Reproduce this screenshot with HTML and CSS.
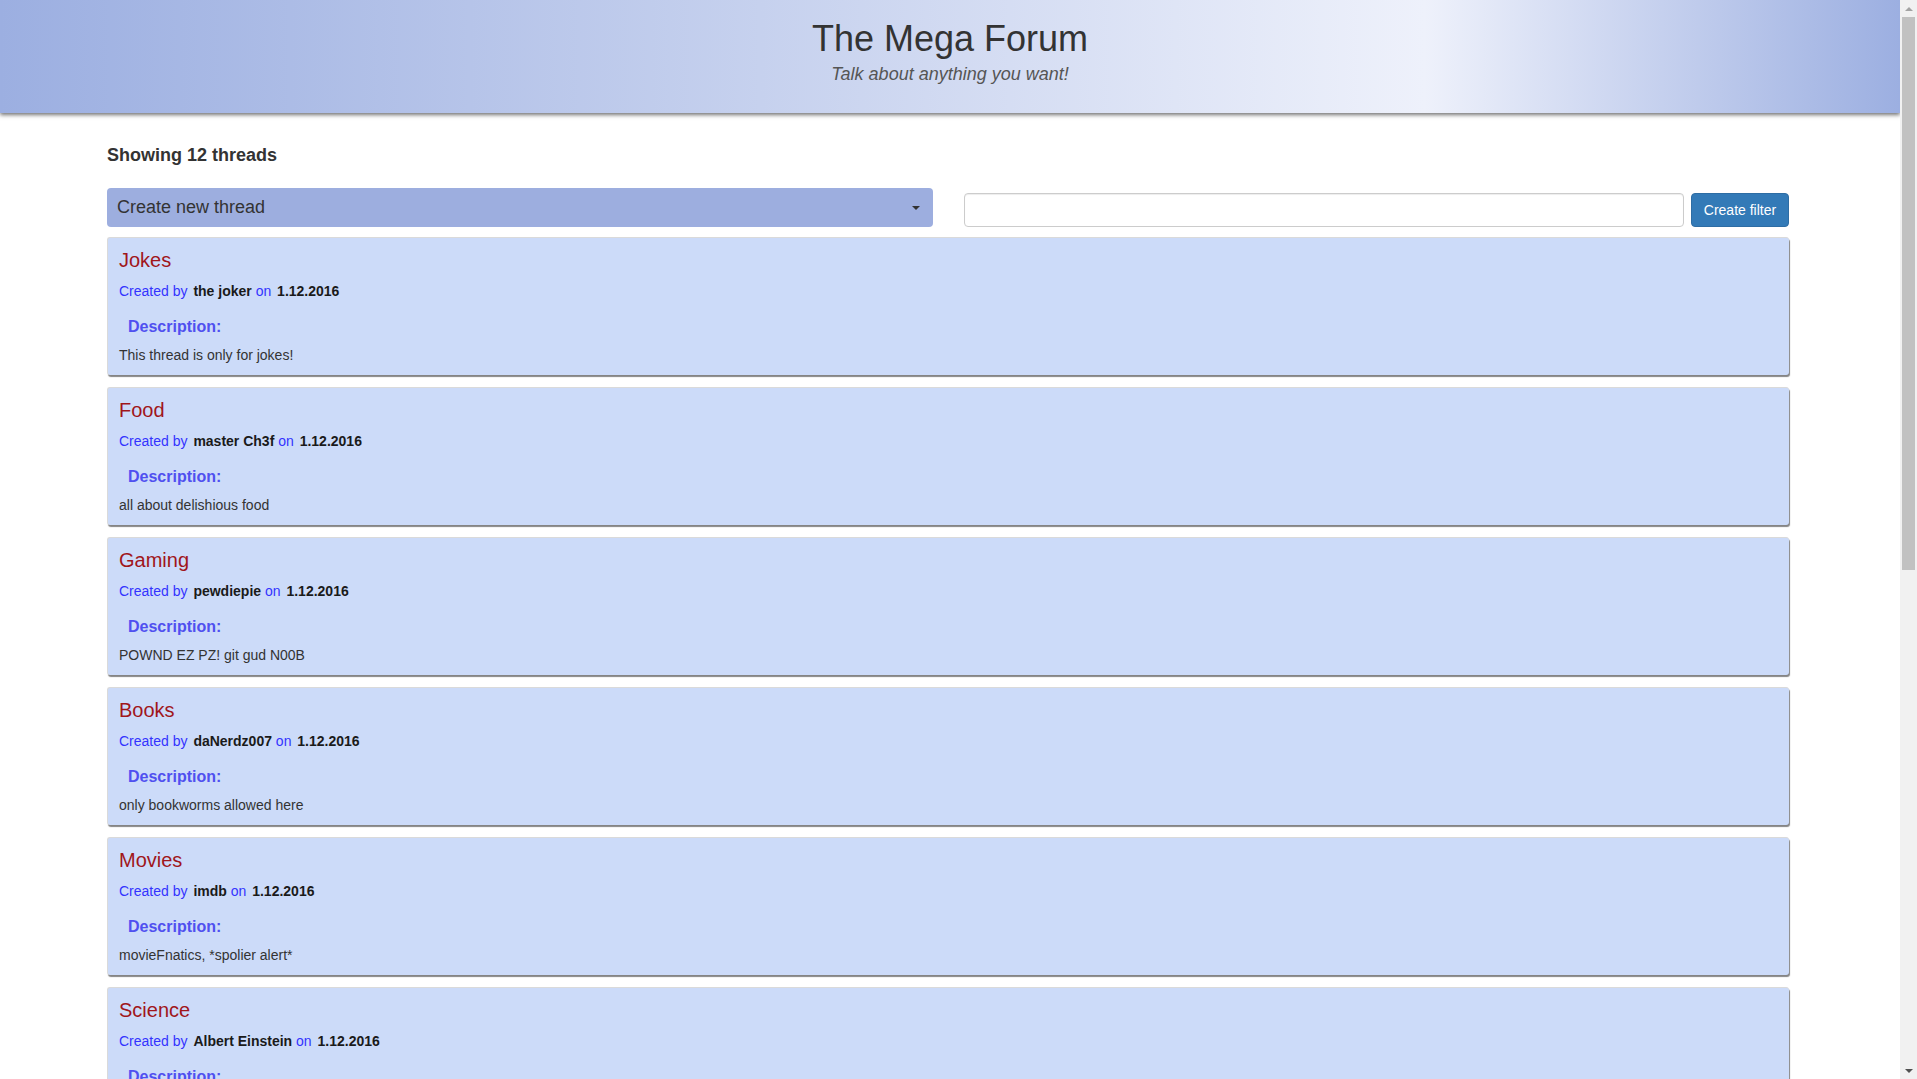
FILE: index.html
```html
<!DOCTYPE html>
<html lang="en">
<head>
<meta charset="utf-8">
<title>The Mega Forum</title>
<link rel="stylesheet" href="styles.css">
</head>
<body>
<div class="page">
<header class="site-header">
  <h1 class="site-title">The Mega Forum</h1>
  <p class="site-tagline">Talk about anything you want!</p>
</header>
<main class="container">
  <h4 class="thread-count">Showing 12 threads</h4>
  <div class="toolbar">
    <div class="new-thread">
      <span class="new-thread-label">Create new thread</span>
      <span class="caret"></span>
    </div>
    <div class="filter-group">
      <input class="filter-input" type="text">
      <button class="btn-primary" type="button">Create filter</button>
    </div>
  </div>
  <ul class="thread-list">
    <li class="thread-card">
      <h3 class="thread-title">Jokes</h3>
      <p class="thread-meta"><span class="meta-label">Created by</span> <b>the joker</b> <span class="meta-label">on</span> <b>1.12.2016</b></p>
      <h5 class="desc-label">Description:</h5>
      <p class="desc-text">This thread is only for jokes!</p>
    </li>
    <li class="thread-card">
      <h3 class="thread-title">Food</h3>
      <p class="thread-meta"><span class="meta-label">Created by</span> <b>master Ch3f</b> <span class="meta-label">on</span> <b>1.12.2016</b></p>
      <h5 class="desc-label">Description:</h5>
      <p class="desc-text">all about delishious food</p>
    </li>
    <li class="thread-card">
      <h3 class="thread-title">Gaming</h3>
      <p class="thread-meta"><span class="meta-label">Created by</span> <b>pewdiepie</b> <span class="meta-label">on</span> <b>1.12.2016</b></p>
      <h5 class="desc-label">Description:</h5>
      <p class="desc-text">POWND EZ PZ! git gud N00B</p>
    </li>
    <li class="thread-card">
      <h3 class="thread-title">Books</h3>
      <p class="thread-meta"><span class="meta-label">Created by</span> <b>daNerdz007</b> <span class="meta-label">on</span> <b>1.12.2016</b></p>
      <h5 class="desc-label">Description:</h5>
      <p class="desc-text">only bookworms allowed here</p>
    </li>
    <li class="thread-card">
      <h3 class="thread-title">Movies</h3>
      <p class="thread-meta"><span class="meta-label">Created by</span> <b>imdb</b> <span class="meta-label">on</span> <b>1.12.2016</b></p>
      <h5 class="desc-label">Description:</h5>
      <p class="desc-text">movieFnatics, *spolier alert*</p>
    </li>
    <li class="thread-card">
      <h3 class="thread-title">Science</h3>
      <p class="thread-meta"><span class="meta-label">Created by</span> <b>Albert Einstein</b> <span class="meta-label">on</span> <b>1.12.2016</b></p>
      <h5 class="desc-label">Description:</h5>
      <p class="desc-text">everything is relative</p>
    </li>
    <li class="thread-card">
      <h3 class="thread-title">Music</h3>
      <p class="thread-meta"><span class="meta-label">Created by</span> <b>dj khaled</b> <span class="meta-label">on</span> <b>1.12.2016</b></p>
      <h5 class="desc-label">Description:</h5>
      <p class="desc-text">share your favourite tunes</p>
    </li>
    <li class="thread-card">
      <h3 class="thread-title">Sports</h3>
      <p class="thread-meta"><span class="meta-label">Created by</span> <b>ronaldo7</b> <span class="meta-label">on</span> <b>1.12.2016</b></p>
      <h5 class="desc-label">Description:</h5>
      <p class="desc-text">football, hockey and more</p>
    </li>
    <li class="thread-card">
      <h3 class="thread-title">Travel</h3>
      <p class="thread-meta"><span class="meta-label">Created by</span> <b>globetrotter</b> <span class="meta-label">on</span> <b>1.12.2016</b></p>
      <h5 class="desc-label">Description:</h5>
      <p class="desc-text">tell us where you have been</p>
    </li>
    <li class="thread-card">
      <h3 class="thread-title">Programming</h3>
      <p class="thread-meta"><span class="meta-label">Created by</span> <b>h4x0r</b> <span class="meta-label">on</span> <b>1.12.2016</b></p>
      <h5 class="desc-label">Description:</h5>
      <p class="desc-text">it works on my machine</p>
    </li>
    <li class="thread-card">
      <h3 class="thread-title">Pets</h3>
      <p class="thread-meta"><span class="meta-label">Created by</span> <b>catlady</b> <span class="meta-label">on</span> <b>1.12.2016</b></p>
      <h5 class="desc-label">Description:</h5>
      <p class="desc-text">cats, dogs and everything in between</p>
    </li>
    <li class="thread-card">
      <h3 class="thread-title">Random</h3>
      <p class="thread-meta"><span class="meta-label">Created by</span> <b>admin</b> <span class="meta-label">on</span> <b>1.12.2016</b></p>
      <h5 class="desc-label">Description:</h5>
      <p class="desc-text">anything that does not fit anywhere else</p>
    </li>
  </ul>
</main>
</div>
<div class="scrollbar" aria-hidden="true">
  <span class="sb-arrow sb-up"></span>
  <span class="sb-thumb"></span>
  <span class="sb-spacer"></span>
  <span class="sb-arrow sb-down"></span>
</div>
</body>
</html>
```

FILE: styles.css
```css
html, body {
  margin: 0;
  padding: 0;
}

body {
  font-family: "Liberation Sans", Arial, sans-serif;
  font-size: 14px;
  color: #333;
  background: #fff;
}

.page {
  width: 1900px;
}

.site-header {
  height: 113px;
  box-sizing: border-box;
  padding-top: 19px;
  text-align: center;
  background: linear-gradient(to right, #9cafe1 0%, #c6d1ee 40%, #eef1fb 75%, #9cafe1 100%);
  box-shadow: 0 2px 4px rgba(0, 0, 0, 0.55);
  position: relative;
  z-index: 1;
}

.site-title {
  margin: 0;
  font-size: 36px;
  line-height: 40px;
  font-weight: normal;
  color: #333;
}

.site-tagline {
  margin: 5px 0 0;
  font-size: 18px;
  line-height: 20px;
  font-style: italic;
  color: #555;
}

.container {
  width: 1682px;
  margin-left: 107px;
  padding-bottom: 6px;
}

.thread-count {
  margin: 32px 0 0;
  font-size: 18px;
  line-height: 20px;
  font-weight: bold;
  color: #333;
}

.toolbar {
  display: grid;
  grid-template-columns: 826px 826px;
  column-gap: 30px;
  align-items: end;
  margin-top: 23px;
}

.new-thread {
  height: 39px;
  box-sizing: border-box;
  background: #9daedf;
  border-radius: 4px;
  display: flex;
  align-items: center;
  justify-content: space-between;
  padding: 0 10px 0 10px;
}

.new-thread-label {
  font-size: 18px;
  color: #333;
}

.caret {
  width: 0;
  height: 0;
  border-left: 4px solid transparent;
  border-right: 4px solid transparent;
  border-top: 4px solid #333;
  margin-right: 3px;
}

.filter-group {
  display: flex;
  gap: 7px;
  height: 34px;
}

.filter-input {
  flex: 1;
  min-width: 0;
  height: 34px;
  box-sizing: border-box;
  border: 1px solid #ccc;
  border-radius: 4px;
  box-shadow: inset 0 1px 1px rgba(0, 0, 0, 0.075);
  margin: 0 0 0 1px;
  padding: 6px 12px;
  font-family: inherit;
  font-size: 14px;
}

.btn-primary {
  flex: 0 0 98px;
  height: 34px;
  box-sizing: border-box;
  background: #337ab7;
  border: 1px solid #2e6da4;
  border-radius: 4px;
  color: #fff;
  font-family: inherit;
  font-size: 14px;
  padding: 0;
  white-space: nowrap;
  text-align: center;
}

.thread-list {
  list-style: none;
  margin: 10px 0 0;
  padding: 0;
}

.thread-card {
  height: 138px;
  box-sizing: border-box;
  margin-bottom: 12px;
  padding: 10px 12px 0 11px;
  background: #ccdbf9;
  border: 1px solid #dadada;
  border-width: 1px 0 0 1px;
  border-radius: 3px;
  box-shadow: 1px 2px 1px #858585;
}

.thread-title {
  margin: 0;
  font-size: 20px;
  line-height: 24px;
  font-weight: normal;
  color: #a0161b;
}

.thread-meta {
  margin: 9px 0 0;
  font-size: 14px;
  line-height: 20px;
  color: #222;
}

.meta-label {
  color: #3333ff;
  margin-right: 2px;
}

.thread-meta b {
  color: #1a1a1a;
}

.desc-label {
  margin: 15px 0 0 9px;
  font-size: 16px;
  line-height: 22px;
  font-weight: bold;
  color: #5050f0;
}

.desc-text {
  margin: 7px 0 0;
  font-size: 14px;
  line-height: 20px;
  color: #333;
}

.scrollbar {
  position: fixed;
  top: 0;
  right: 0;
  width: 17px;
  height: 100vh;
  background: #f1f1f1;
  display: flex;
  flex-direction: column;
  align-items: center;
  z-index: 5;
}

.sb-arrow {
  flex: 0 0 17px;
  width: 17px;
  display: flex;
  align-items: center;
  justify-content: center;
  position: relative;
}

.sb-up::before,
.sb-down::before {
  content: "";
  width: 0;
  height: 0;
  border-left: 4px solid transparent;
  border-right: 4px solid transparent;
}

.sb-up::before {
  border-bottom: 4px solid #a3a3a3;
}

.sb-down::before {
  border-top: 4px solid #505050;
}

.sb-thumb {
  flex: 0 0 553px;
  width: 13px;
  background: #c1c1c1;
}

.sb-spacer {
  flex: 1;
}
```
